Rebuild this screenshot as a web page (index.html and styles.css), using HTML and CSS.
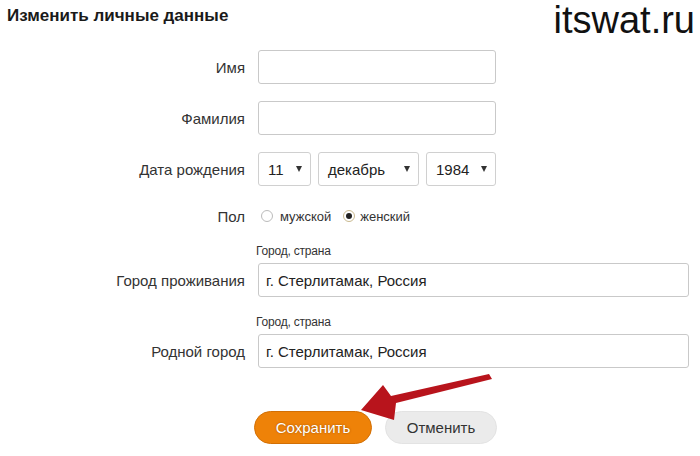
FILE: index.html
```html
<!DOCTYPE html>
<html lang="ru">
  <head>
    <meta charset="UTF-8" />
    <meta name="viewport" content="width=device-width, initial-scale=1.0" />
    <title>Изменить личные данные</title>
    <link rel="stylesheet" href="styles.css">
  </head>
  <body>
    <div class="page">
      <div class="header">
        <h1 class="title">Изменить личные данные</h1>
        <div class="site">itswat.ru</div>
      </div>

      <form class="form">
        <div class="row">
          <label class="label" for="name">Имя</label>
          <input class="field" type="text" id="name" />
        </div>

        <div class="row">
          <label class="label" for="surname">Фамилия</label>
          <input class="field" type="text" id="surname" />
        </div>

        <div class="row">
          <span class="label">Дата рождения</span>
          <div class="dates">
            <div class="select day"><span>11</span><i class="caret"></i></div>
            <div class="select month"><span>декабрь</span><i class="caret"></i></div>
            <div class="select year"><span>1984</span><i class="caret"></i></div>
          </div>
        </div>

        <div class="row gender">
          <span class="label">Пол</span>
          <div class="radios">
            <span class="radio"></span><span class="radio-text">мужской</span>
            <span class="radio checked"></span><span class="radio-text">женский</span>
          </div>
        </div>

        <div class="row city">
          <span class="hint">Город, страна</span>
          <label class="label" for="city">Город проживания</label>
          <input class="field wide" type="text" id="city" value="г. Стерлитамак, Россия" />
        </div>

        <div class="row city">
          <span class="hint">Город, страна</span>
          <label class="label" for="home">Родной город</label>
          <input class="field wide" type="text" id="home" value="г. Стерлитамак, Россия" />
        </div>

        <div class="buttons">
          <button class="btn save" type="button">Сохранить</button>
          <button class="btn cancel" type="button">Отменить</button>
        </div>
      </form>

      <!-- red annotation arrow -->
      <svg class="arrow" width="700" height="456" viewBox="0 0 700 456">
        <polygon points="361,410 383,385 391,396 489,374 492,379 396,403 394,420" fill="#b8141c" />
      </svg>
    </div>
  </body>
</html>
```

FILE: styles.css
```css
body {
  margin: 0;
  background: #fff;
  font-family: "Liberation Sans", Arial, sans-serif;
  color: #333;
}

.page {
  position: relative;
  width: 700px;
  height: 456px;
  overflow: hidden;
}

.header {
  display: flex;
  justify-content: space-between;
  align-items: flex-start;
  height: 50px;
}

.title {
  margin: 6px 0 0 7px;
  font-size: 17px;
  line-height: 20px;
  font-weight: bold;
  color: #1a1a1a;
}

.site {
  margin-right: 5px;
  font-size: 38px;
  line-height: 40px;
  color: #111;
}

.form {
  margin: 0;
}

.row {
  display: grid;
  grid-template-columns: 245px auto;
  column-gap: 13px;
  align-items: center;
  margin-bottom: 17px;
}

.label {
  text-align: right;
  font-size: 15px;
  color: #333;
}

.field {
  box-sizing: border-box;
  width: 238px;
  height: 34px;
  padding: 0 7px;
  border: 1px solid #c9c9c9;
  border-radius: 3px;
  font-family: inherit;
  font-size: 15px;
  color: #222;
  outline: none;
}

.field.wide {
  width: 431px;
}

.dates {
  display: flex;
  gap: 7px;
}

.select {
  box-sizing: border-box;
  display: flex;
  justify-content: space-between;
  align-items: center;
  height: 34px;
  padding: 0 8px 0 9px;
  border: 1px solid #d0d0d0;
  border-radius: 3px;
  font-size: 15px;
  color: #222;
}

.day {
  width: 53px;
}

.month {
  width: 101px;
}

.year {
  width: 70px;
}

.caret {
  width: 0;
  height: 0;
  border-left: 3px solid transparent;
  border-right: 3px solid transparent;
  border-top: 6px solid #333;
}

.gender {
  height: 26px;
  margin-bottom: 15px;
}

.radios {
  display: flex;
  align-items: center;
  font-size: 13px;
  color: #333;
}

.radio {
  box-sizing: border-box;
  width: 12px;
  height: 12px;
  margin: 0 7px 0 3px;
  border: 1px solid #bbb;
  border-radius: 50%;
}

.radio.checked {
  position: relative;
  margin-left: 12px;
  margin-right: 5px;
  border-color: #c9b98f;
}

.radio.checked::after {
  content: "";
  position: absolute;
  left: 2px;
  top: 2px;
  width: 6px;
  height: 6px;
  border-radius: 50%;
  background: #222;
}

.city {
  grid-template-rows: 14px 34px;
  row-gap: 5px;
  margin-bottom: 18px;
}

.hint {
  grid-column: 2;
  grid-row: 1;
  margin-left: -2px;
  font-size: 12px;
  line-height: 14px;
  color: #333;
  letter-spacing: -0.2px;
}

.city .label {
  grid-column: 1;
  grid-row: 2;
}

.city .field {
  grid-column: 2;
  grid-row: 2;
}

.buttons {
  display: flex;
  gap: 13px;
  margin: 43px 0 0 254px;
}

.btn {
  height: 33px;
  border-radius: 17px;
  font-family: inherit;
  font-size: 15px;
  cursor: pointer;
}

.save {
  width: 118px;
  background: #ee8208;
  border: 1px solid #d26f04;
  color: #fff;
  text-shadow: 0 0 2px #9a4d00;
}

.cancel {
  width: 112px;
  background: #ebebeb;
  border: 1px solid #e3e3e3;
  color: #333;
}

.arrow {
  position: absolute;
  left: 0;
  top: 0;
  pointer-events: none;
}
```
